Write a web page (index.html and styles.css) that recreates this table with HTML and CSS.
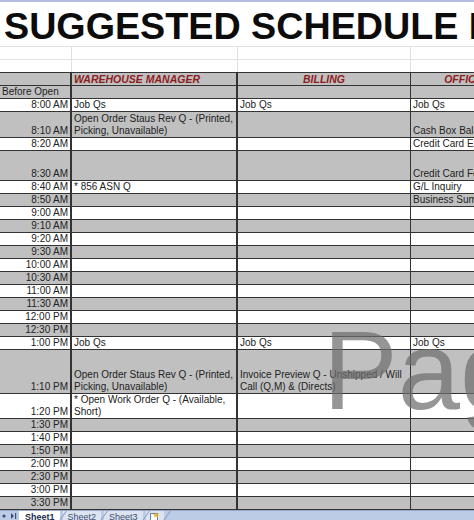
FILE: index.html
```html
<!DOCTYPE html>
<html>
<head>
<meta charset="utf-8">
<link rel="stylesheet" href="styles.css">
</head>
<body>
<div class="page">
  <div class="sheet">
    <div class="topbar"></div>
    <div class="title">SUGGESTED SCHEDULE FOR</div>
    <div class="row blank"><div class="c"></div><div class="c"></div><div class="c"></div><div class="c"></div></div>
    <div class="row blank edge"><div class="c"></div><div class="c"></div><div class="c"></div><div class="c"></div></div>

    <div class="row gray"><div class="c"></div><div class="c h"><div>WAREHOUSE MANAGER</div></div><div class="c h ctr"><div>BILLING</div></div><div class="c h ctr"><div>OFFICE MANAGER</div></div></div>
    <div class="row gray"><div class="c"><div>Before Open</div></div><div class="c"></div><div class="c"></div><div class="c"></div></div>
    <div class="row"><div class="c t"><div>8:00 AM</div></div><div class="c"><div>Job Qs</div></div><div class="c"><div>Job Qs</div></div><div class="c"><div>Job Qs</div></div></div>
    <div class="row gray r26"><div class="c t"><div>8:10 AM</div></div><div class="c"><div>Open Order Staus Rev Q - (Printed,<br>Picking, Unavailable)</div></div><div class="c"></div><div class="c"><div>Cash Box Balance</div></div></div>
    <div class="row"><div class="c t"><div>8:20 AM</div></div><div class="c"></div><div class="c"></div><div class="c"><div>Credit Card Entry</div></div></div>
    <div class="row gray r30"><div class="c t"><div>8:30 AM</div></div><div class="c"></div><div class="c"></div><div class="c"><div>Credit Card Fees</div></div></div>
    <div class="row"><div class="c t"><div>8:40 AM</div></div><div class="c"><div>* 856 ASN Q</div></div><div class="c"></div><div class="c"><div>G/L Inquiry</div></div></div>
    <div class="row gray"><div class="c t"><div>8:50 AM</div></div><div class="c"></div><div class="c"></div><div class="c"><div>Business Summary</div></div></div>
    <div class="row"><div class="c t"><div>9:00 AM</div></div><div class="c"></div><div class="c"></div><div class="c"></div></div>
    <div class="row gray"><div class="c t"><div>9:10 AM</div></div><div class="c"></div><div class="c"></div><div class="c"></div></div>
    <div class="row"><div class="c t"><div>9:20 AM</div></div><div class="c"></div><div class="c"></div><div class="c"></div></div>
    <div class="row gray"><div class="c t"><div>9:30 AM</div></div><div class="c"></div><div class="c"></div><div class="c"></div></div>
    <div class="row"><div class="c t"><div>10:00 AM</div></div><div class="c"></div><div class="c"></div><div class="c"></div></div>
    <div class="row gray"><div class="c t"><div>10:30 AM</div></div><div class="c"></div><div class="c"></div><div class="c"></div></div>
    <div class="row"><div class="c t"><div>11:00 AM</div></div><div class="c"></div><div class="c"></div><div class="c"></div></div>
    <div class="row gray"><div class="c t"><div>11:30 AM</div></div><div class="c"></div><div class="c"></div><div class="c"></div></div>
    <div class="row"><div class="c t"><div>12:00 PM</div></div><div class="c"></div><div class="c"></div><div class="c"></div></div>
    <div class="row gray"><div class="c t"><div>12:30 PM</div></div><div class="c"></div><div class="c"></div><div class="c"></div></div>
    <div class="row"><div class="c t"><div>1:00 PM</div></div><div class="c"><div>Job Qs</div></div><div class="c"><div>Job Qs</div></div><div class="c"><div>Job Qs</div></div></div>
    <div class="row gray r44"><div class="c t"><div>1:10 PM</div></div><div class="c"><div>Open Order Staus Rev Q - (Printed,<br>Picking, Unavailable)</div></div><div class="c"><div>Invoice Preview Q - Unshipped / Will<br>Call (Q,M) &amp; (Directs)</div></div><div class="c"></div></div>
    <div class="row r25"><div class="c t"><div>1:20 PM</div></div><div class="c"><div>* Open Work Order Q - (Available,<br>Short)</div></div><div class="c"></div><div class="c"></div></div>
    <div class="row gray"><div class="c t"><div>1:30 PM</div></div><div class="c"></div><div class="c"></div><div class="c"></div></div>
    <div class="row"><div class="c t"><div>1:40 PM</div></div><div class="c"></div><div class="c"></div><div class="c"></div></div>
    <div class="row gray"><div class="c t"><div>1:50 PM</div></div><div class="c"></div><div class="c"></div><div class="c"></div></div>
    <div class="row"><div class="c t"><div>2:00 PM</div></div><div class="c"></div><div class="c"></div><div class="c"></div></div>
    <div class="row gray"><div class="c t"><div>2:30 PM</div></div><div class="c"></div><div class="c"></div><div class="c"></div></div>
    <div class="row"><div class="c t"><div>3:00 PM</div></div><div class="c"></div><div class="c"></div><div class="c"></div></div>
    <div class="row gray"><div class="c t"><div>3:30 PM</div></div><div class="c"></div><div class="c"></div><div class="c"></div></div>

    <div class="watermark">Page 1</div>
  </div>

  <div class="tabs">
    <div class="nav">
      <svg width="18" height="10" viewBox="0 0 18 10"><circle cx="3" cy="5" r="1.6" fill="#3a4f78"/><path d="M10 2 L13 5 L10 8 Z" fill="#3a4f78"/><rect x="14" y="2" width="1.2" height="6" fill="#3a4f78"/></svg>
    </div>
    <div class="tab active">Sheet1</div>
    <div class="sep"></div>
    <div class="tab">Sheet2</div>
    <div class="sep"></div>
    <div class="tab">Sheet3</div>
    <div class="sep"></div>
    <div class="tab icon">
      <svg width="12" height="10" viewBox="0 0 12 10"><rect x="1.5" y="2.5" width="7" height="7" fill="#fff" stroke="#6a7fa6"/><path d="M7 1 L8 3 L10 3.2 L8.5 4.5 L9 6.5 L7 5.4 L5 6.5 L5.5 4.5 L4 3.2 L6 3 Z" fill="#e9b22c"/></svg>
    </div>
    <div class="sep"></div>
  </div>
</div>
</body>
</html>
```
FILE: styles.css
```css
html, body {
  margin: 0;
  padding: 0;
  background: #fff;
}

.page {
  width: 474px;
  height: 520px;
  overflow: hidden;
  font-family: "Liberation Sans", Arial, sans-serif;
  color: #222;
}

.sheet {
  position: relative;
  width: 474px;
  height: 510px;
  overflow: hidden;
}

.topbar {
  height: 2px;
  background: #b3bce2;
}

.title {
  box-sizing: border-box;
  height: 45px;
  padding: 6px 0 0 4px;
  font-size: 37.7px;
  line-height: 37px;
  font-weight: bold;
  color: #0c0c0c;
  white-space: nowrap;
  border-bottom: 1px solid #e2e2e2;
}

.row {
  box-sizing: border-box;
  display: grid;
  grid-template-columns: 72px 166px 173px 162px;
  width: 573px;
  height: 13px;
  background: #fff;
  border-bottom: 1px solid #333;
  font-size: 10px;
  line-height: 12px;
}

.row.gray { background: #c0c0c0; }
.row.r26 { height: 26px; }
.row.r30 { height: 30px; }
.row.r44 { height: 44px; }
.row.r25 { height: 25px; }

.c {
  box-sizing: border-box;
  display: flex;
  flex-direction: column;
  justify-content: flex-end;
  padding: 0 2px;
  white-space: nowrap;
  min-width: 0;
}

.c:nth-child(1) { border-right: 2px solid #333; }
.c:nth-child(2) { border-right: 2px solid #333; }
.c:nth-child(3) { border-right: 1px solid #333; }

.c.t { text-align: right; }

.row.blank {
  border-bottom: 1px solid #e2e2e2;
}
.row.blank.edge {
  border-bottom: 1px solid #333;
}
.row.blank .c:nth-child(1) { border-right: 1px solid #e0e0e0; padding-right: 3px; }
.row.blank .c:nth-child(2) { border-right: 1px solid #e0e0e0; }
.row.blank .c:nth-child(3) { border-right: 1px solid #e0e0e0; }

.c.h {
  font-weight: bold;
  font-style: italic;
  font-size: 10.5px;
  color: #8e1b1e;
}
.c.ctr { text-align: center; }

.watermark {
  position: absolute;
  left: 323px;
  top: 316px;
  font-size: 112px;
  line-height: 110px;
  color: rgba(110, 110, 110, 0.72);
  white-space: nowrap;
  pointer-events: none;
}

.tabs {
  box-sizing: border-box;
  display: flex;
  align-items: flex-start;
  height: 10px;
  background: #bccbe6;
  border-top: 1px solid #97a9cb;
  font-size: 9px;
  line-height: 12px;
  color: #3b4e74;
}

.nav {
  width: 18px;
  padding: 0 0 0 1px;
}

.tab {
  padding: 0 5px 0 5px;
  height: 14px;
  background: #dde4f0;
}
.tab.active {
  background: #fff;
  font-weight: bold;
  color: #1c2d52;
  padding-left: 6px;
}
.tab.icon {
  padding: 0 3px;
}

.sep {
  width: 1px;
  height: 14px;
  background: #8397bd;
  transform: skewX(-35deg);
  margin: 0 1px;
}
```
